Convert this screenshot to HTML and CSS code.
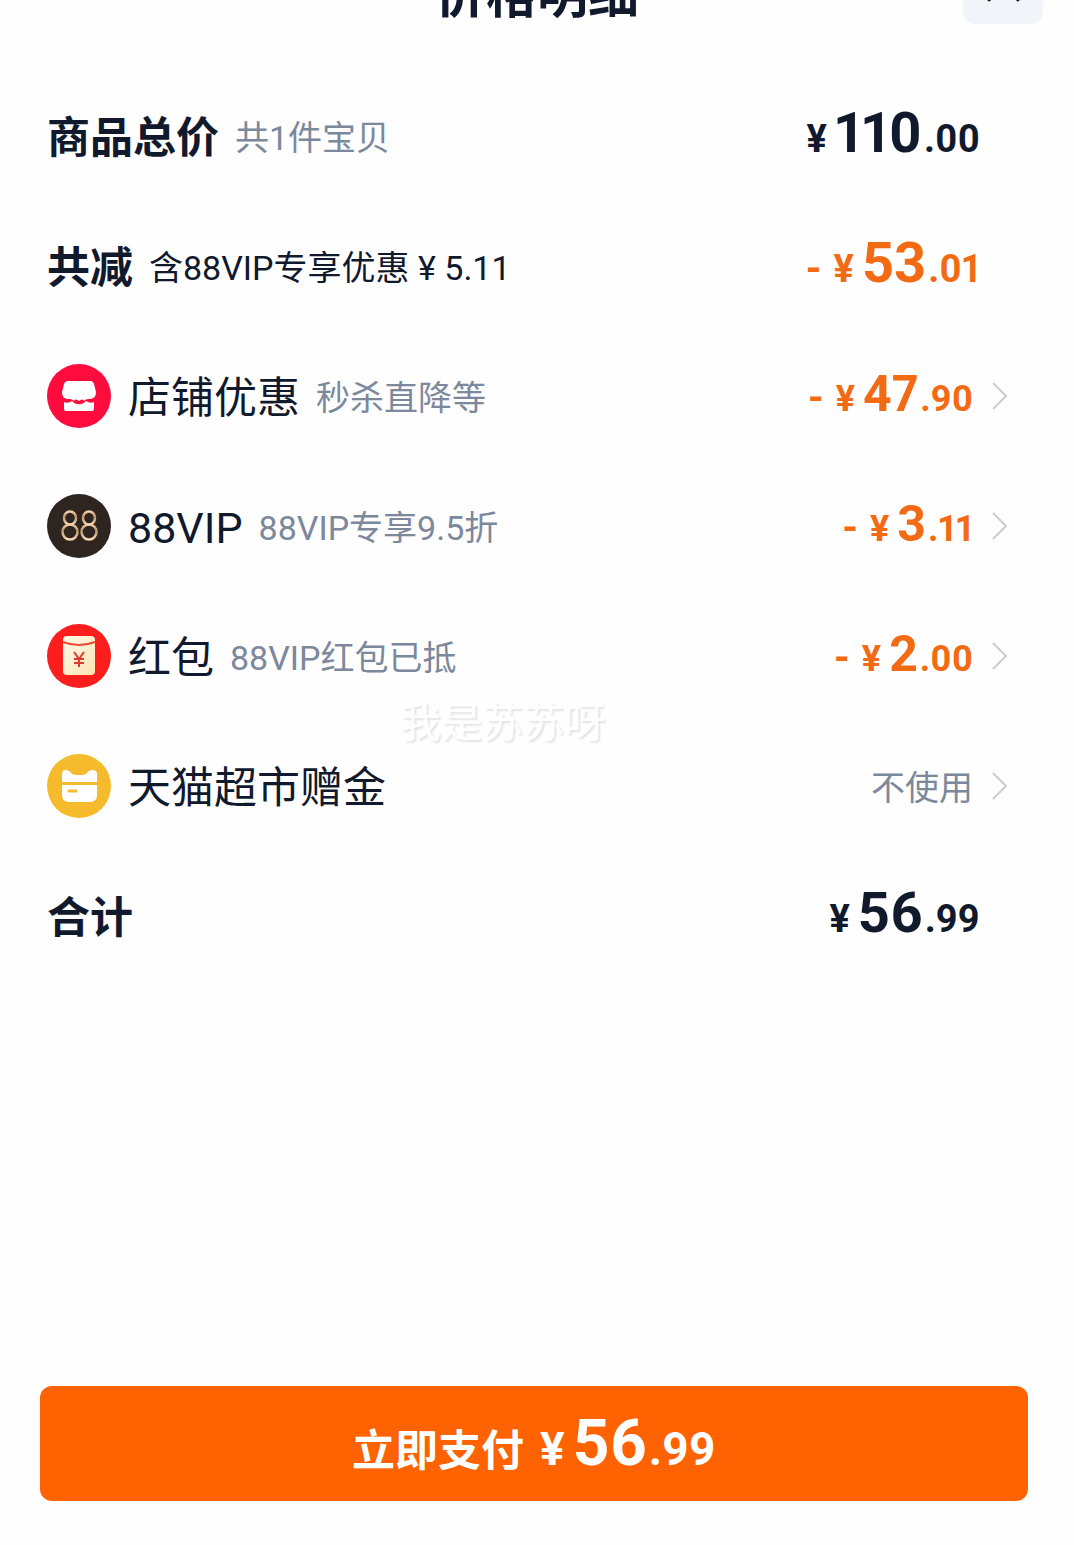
FILE: index.html
```
<!DOCTYPE html>
<html lang="zh-CN">
<head>
  <meta charset="UTF-8" />
  <meta name="viewport" content="width=device-width, initial-scale=1.0" />
  <title>价格明细</title>
  <link rel="stylesheet" href="styles.css">
</head>
<body>
  <div class="sheet">
    <header class="sheet-header">
      <h1>价格明细</h1>
      <button class="close-button" type="button" aria-label="关闭">
        <svg width="40" height="40" viewBox="0 0 40 40" fill="none" stroke="#11192d" stroke-width="3" stroke-linecap="round">
          <path d="M6 4L35 36M35 4L6 36" />
        </svg>
      </button>
    </header>

    <main class="price-list">
      <div class="row summary">
        <h2>商品总价</h2>
        <span class="note">共1件宝贝</span>
        <span class="price"><span class="yen">¥</span>110<small>.00</small></span>
      </div>

      <div class="row summary">
        <h2>共减</h2>
        <span class="note dark">含88VIP专享优惠 ¥ 5.11</span>
        <span class="price discount"><span class="minus">-</span><span class="yen">¥</span>53<small>.01</small></span>
      </div>

      <button class="row item" type="button">
        <svg class="icon" viewBox="0 0 64 64" aria-hidden="true">
          <circle cx="32" cy="32" r="32" fill="#ff0b3e" />
          <path d="M21 17h22q3 0 4 3l2 8c0 5-3 7-6 7-2 0-4 0-6 2-1-2-3-2-5 0-2-2-4-2-5 0-2-2-4-2-6-2-3 0-6-2-6-7l2-8q1-3 4-3z" fill="#fff" />
          <path d="M17 38q4 2 8-1 3 4 7 3 4 1 7-3 4 3 8 1v7q0 2-2 2H19q-2 0-2-2z" fill="#fff" />
        </svg>
        <span class="label">店铺优惠</span>
        <span class="note">秒杀直降等</span>
        <span class="price discount"><span class="minus">-</span><span class="yen">¥</span>47<small>.90</small></span>
        <svg class="arrow" viewBox="0 0 16 28" aria-hidden="true"><path d="M1 1l13 13L1 27" /></svg>
      </button>

      <button class="row item" type="button">
        <svg class="icon" viewBox="0 0 64 64" aria-hidden="true">
          <defs>
            <linearGradient id="gold" x1="0" y1="0" x2="0" y2="1">
              <stop offset="0" stop-color="#f3cfa5" />
              <stop offset="0.4" stop-color="#b8946c" />
              <stop offset="1" stop-color="#f8d8b2" />
            </linearGradient>
          </defs>
          <circle cx="32" cy="32" r="32" fill="#2f2520" />
          <g fill="none" stroke="url(#gold)" stroke-width="2.5">
            <ellipse cx="23" cy="24" rx="6" ry="6.500" />
            <ellipse cx="23" cy="38" rx="7.500" ry="7.500" />
            <ellipse cx="42" cy="24" rx="6" ry="6.500" />
            <ellipse cx="42" cy="38" rx="7.500" ry="7.500" />
          </g>
        </svg>
        <span class="label">88VIP</span>
        <span class="note">88VIP专享9.5折</span>
        <span class="price discount"><span class="minus">-</span><span class="yen">¥</span>3<small>.11</small></span>
        <svg class="arrow" viewBox="0 0 16 28" aria-hidden="true"><path d="M1 1l13 13L1 27" /></svg>
      </button>

      <button class="row item" type="button">
        <svg class="icon" viewBox="0 0 64 64" aria-hidden="true">
          <defs>
            <linearGradient id="packet" x1="0" y1="0" x2="1" y2="1">
              <stop offset="0" stop-color="#fffbe9" />
              <stop offset="1" stop-color="#fbe2b4" />
            </linearGradient>
          </defs>
          <circle cx="32" cy="32" r="32" fill="#fc1d1d" />
          <rect x="16" y="12" width="32" height="39" rx="4" fill="url(#packet)" />
          <path d="M16 18q16 6 32 0" fill="none" stroke="#ee4a38" stroke-width="2" />
          <path d="M27 28l5 7 5-7M32 35v8M27 35h10M27 39h10" fill="none" stroke="#e0392e" stroke-width="2" />
        </svg>
        <span class="label">红包</span>
        <span class="note">88VIP红包已抵</span>
        <span class="price discount"><span class="minus">-</span><span class="yen">¥</span>2<small>.00</small></span>
        <svg class="arrow" viewBox="0 0 16 28" aria-hidden="true"><path d="M1 1l13 13L1 27" /></svg>
      </button>

      <button class="row item" type="button">
        <svg class="icon" viewBox="0 0 64 64" aria-hidden="true">
          <circle cx="32" cy="32" r="32" fill="#f6bb2c" />
          <path d="M15 28v-8q0-4 4-4c4 0 5 5 10 5h6c5 0 6-5 10-5q5 0 5 4v8z" fill="#fff" />
          <path d="M15 31h35v10q0 7-7 7H22q-7 0-7-7z" fill="#fff" />
          <path d="M22 37h7" stroke="#f6bb2c" stroke-width="3" stroke-linecap="round" />
        </svg>
        <span class="label">天猫超市赠金</span>
        <span class="note unused">不使用</span>
        <svg class="arrow" viewBox="0 0 16 28" aria-hidden="true"><path d="M1 1l13 13L1 27" /></svg>
      </button>

      <div class="row summary">
        <h2>合计</h2>
        <span class="price"><span class="yen">¥</span>56<small>.99</small></span>
      </div>

      <span class="watermark">我是苏苏呀</span>
    </main>

    <footer class="sheet-footer">
      <button class="pay-button" type="button">
        立即支付
        <span class="price"><span class="yen">¥</span>56<small>.99</small></span>
      </button>
    </footer>
  </div>
</body>
</html>
```
FILE: styles.css
```
* {
  box-sizing: border-box;
}

body {
  margin: 0;
  background: #fefefe;
  color: #11192d;
  font-family: Roboto, "Noto Sans CJK SC", sans-serif;
}

button {
  border: none;
  background: none;
  padding: 0;
  color: inherit;
  font-family: inherit;
  text-align: left;
  cursor: pointer;
}

.sheet {
  display: flex;
  flex-direction: column;
  min-height: 100vh;
  overflow: hidden;
}

/* the header is partly scrolled out of view */
.sheet-header {
  display: grid;
  grid-template-columns: 80px 1fr 80px;
  align-items: end;
  height: 80px;
  margin-top: -56px;
  padding: 0 31px;
}

.sheet-header h1 {
  grid-column: 2;
  margin: 0;
  font-size: 51px;
  line-height: 56px;
  text-align: center;
}

.close-button {
  display: flex;
  align-items: center;
  justify-content: center;
  height: 80px;
  border-radius: 12px;
  background: #f1f5f9;
}

.price-list {
  position: relative;
  display: flex;
  flex-direction: column;
  gap: 66px;
  padding: 80px 66px 0 47px;
}

.row {
  display: flex;
  align-items: center;
  width: 100%;
  height: 64px;
  white-space: nowrap;
}

.summary {
  padding-right: 28px;
}

.row h2,
.label {
  margin: 0;
  padding-top: 4px;
  font-size: 43px;
  line-height: 60px;
}

.icon {
  flex: none;
  width: 64px;
  height: 64px;
  margin-right: 17px;
}

.note {
  margin-left: 16px;
  padding-top: 4px;
  color: #7c889c;
  font-size: 34px;
  line-height: 60px;
}

.note.dark {
  color: #11192d;
}

.note.unused {
  margin-left: auto;
}

.price {
  margin-left: auto;
  font-size: 56px;
  font-weight: 700;
  font-variant-numeric: proportional-nums;
  line-height: 64px;
}

.price small,
.price .yen {
  font-size: 38px;
}

.price small {
  margin-left: 2px;
}

.price .yen {
  margin-right: 8px;
}

.minus {
  margin-right: 12px;
  font-size: 40px;
}

.item .price {
  font-size: 50px;
}

.item .price small,
.item .price .yen {
  font-size: 36px;
}

.discount {
  color: #f26a13;
}

.arrow {
  flex: none;
  width: 16px;
  height: 28px;
  margin-left: 19px;
  fill: none;
  stroke: #cccccc;
  stroke-width: 2;
}

.watermark {
  position: absolute;
  top: 674px;
  left: 400px;
  color: #ffffff;
  font-size: 41px;
  line-height: 50px;
  text-shadow: 2px 2px 2px #e4e4e9;
  pointer-events: none;
}

.sheet-footer {
  margin-top: auto;
  padding: 40px 46px 44px 40px;
}

.pay-button {
  display: flex;
  align-items: center;
  justify-content: center;
  gap: 16px;
  width: 100%;
  height: 115px;
  padding-top: 6px;
  border-radius: 12px;
  background: #ff6200;
  color: #ffffff;
  font-size: 43px;
  font-weight: 700;
}

.pay-button .price {
  margin-left: 0;
  font-size: 64px;
}

.pay-button .price small,
.pay-button .price .yen {
  font-size: 46px;
}
```
